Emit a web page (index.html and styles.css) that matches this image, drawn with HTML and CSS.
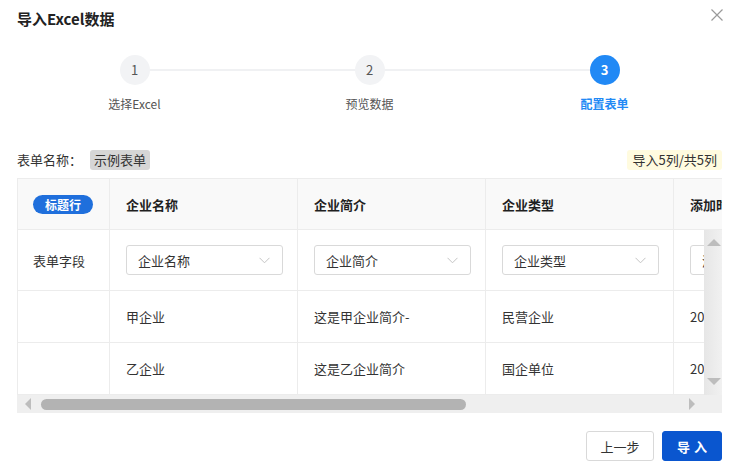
FILE: index.html
```html
<!DOCTYPE html>
<html lang="zh-CN">
<head>
    <meta charset="UTF-8">
    <title>导入Excel数据</title>
    <link rel="stylesheet" href="styles.css">
</head>
<body>
    <div class="dialog">
        <!-- Title bar -->
        <div class="dialog-header">
            <span class="dialog-title">导入Excel数据</span>
            <svg class="close" width="12" height="12" viewBox="0 0 12 12">
                <path d="M0.5 0.5 L11.5 11.5 M11.5 0.5 L0.5 11.5" stroke="#9a9a9a" stroke-width="1.2" fill="none"/>
            </svg>
        </div>

        <!-- Steps -->
        <div class="steps">
            <div class="step">
                <div class="step-num">1</div>
                <div class="step-label">选择Excel</div>
            </div>
            <div class="step">
                <div class="step-num">2</div>
                <div class="step-label">预览数据</div>
            </div>
            <div class="step active">
                <div class="step-num">3</div>
                <div class="step-label">配置表单</div>
            </div>
        </div>

        <!-- Form name row -->
        <div class="form-info">
            <div class="form-name">
                <span>表单名称：</span>
                <span class="tag-grey">示例表单</span>
            </div>
            <span class="tag-yellow">导入5列/共5列</span>
        </div>

        <!-- Mapping table -->
        <div class="table-box">
            <div class="t-row t-head">
                <div class="cell"><span class="badge">标题行</span></div>
                <div class="cell">企业名称</div>
                <div class="cell">企业简介</div>
                <div class="cell">企业类型</div>
                <div class="cell">添加时间</div>
            </div>
            <div class="t-body-wrap">
                <div class="t-body">
                    <div class="t-row t-fields">
                        <div class="cell">表单字段</div>
                        <div class="cell"><div class="select">企业名称<svg class="chev" width="11" height="7" viewBox="0 0 11 7"><path d="M0.5 0.8 L5.5 5.8 L10.5 0.8" stroke="#c4c4c4" fill="none"/></svg></div></div>
                        <div class="cell"><div class="select">企业简介<svg class="chev" width="11" height="7" viewBox="0 0 11 7"><path d="M0.5 0.8 L5.5 5.8 L10.5 0.8" stroke="#c4c4c4" fill="none"/></svg></div></div>
                        <div class="cell"><div class="select">企业类型<svg class="chev" width="11" height="7" viewBox="0 0 11 7"><path d="M0.5 0.8 L5.5 5.8 L10.5 0.8" stroke="#c4c4c4" fill="none"/></svg></div></div>
                        <div class="cell"><div class="select">添加时间<svg class="chev" width="11" height="7" viewBox="0 0 11 7"><path d="M0.5 0.8 L5.5 5.8 L10.5 0.8" stroke="#c4c4c4" fill="none"/></svg></div></div>
                    </div>
                    <div class="t-row t-data">
                        <div class="cell"></div>
                        <div class="cell">甲企业</div>
                        <div class="cell">这是甲企业简介-</div>
                        <div class="cell">民营企业</div>
                        <div class="cell">2023-01-01</div>
                    </div>
                    <div class="t-row t-data">
                        <div class="cell"></div>
                        <div class="cell">乙企业</div>
                        <div class="cell">这是乙企业简介</div>
                        <div class="cell">国企单位</div>
                        <div class="cell">2023-01-02</div>
                    </div>
                </div>
                <div class="vscroll">
                    <span class="arrow-up"></span>
                    <span class="arrow-down"></span>
                </div>
            </div>
            <div class="hscroll">
                <span class="arrow-left"></span>
                <div class="h-thumb"></div>
                <span class="arrow-right"></span>
            </div>
        </div>

        <!-- Footer buttons -->
        <div class="dialog-footer">
            <button class="btn">上一步</button>
            <button class="btn btn-primary">导入</button>
        </div>
    </div>
</body>
</html>
```

FILE: styles.css
```css
body {
    margin: 0;
    padding: 0;
    background-color: #ffffff;
    font-family: "Noto Sans CJK SC", "Noto Sans", sans-serif;
    color: #333333;
}

.dialog {
    width: 705px;
    padding: 0 8px 0 17px;
}

/* Title bar */
.dialog-header {
    height: 38px;
    display: flex;
    justify-content: space-between;
    align-items: center;
}

.dialog-title {
    font-size: 15px;
    font-weight: bold;
    color: #222222;
    line-height: 20px;
}

.close {
    margin-right: -1px;
    margin-top: -8px;
}

/* Steps */
.steps {
    display: flex;
    padding-top: 17px;
}

.step {
    flex: 1;
    display: flex;
    flex-direction: column;
    align-items: center;
    position: relative;
}

.step:not(:last-child)::after {
    content: "";
    position: absolute;
    top: 14px;
    left: calc(50% + 15px);
    width: calc(100% - 30px);
    height: 2px;
    background-color: #f0f1f3;
}

.step-num {
    width: 30px;
    height: 30px;
    border-radius: 50%;
    background-color: #f2f3f5;
    color: #555555;
    font-size: 13px;
    line-height: 30px;
    text-align: center;
}

.step-label {
    margin-top: 10px;
    font-size: 12px;
    line-height: 18px;
    color: #555555;
}

.step.active .step-num {
    background-color: #2189f5;
    color: #ffffff;
    font-weight: bold;
}

.step.active .step-label {
    color: #2189f5;
    font-weight: bold;
}

/* Form name row */
.form-info {
    margin-top: 37px;
    display: flex;
    justify-content: space-between;
    align-items: center;
    font-size: 13px;
    line-height: 20px;
}

.form-name {
    display: flex;
    align-items: center;
    gap: 8px;
}

.tag-grey {
    background-color: #d6d6d6;
    border-radius: 3px;
    padding: 0 4px;
    color: #333333;
}

.tag-yellow {
    background-color: #fffbdf;
    border-radius: 3px;
    padding: 0 5px;
    color: #333333;
}

/* Table */
.table-box {
    margin-top: 8px;
    width: 705px;
    overflow: hidden;
}

.t-row {
    display: grid;
    grid-template-columns: 93px 188px 188px 188px 188px;
    width: 845px;
}

.cell {
    display: flex;
    align-items: center;
    padding-left: 16px;
    border-right: 1px solid #ececec;
    border-bottom: 1px solid #ececec;
    font-size: 13px;
    white-space: nowrap;
    overflow: hidden;
}

.cell:first-child {
    border-left: 1px solid #ececec;
    padding-left: 15px;
}

.t-head {
    height: 52px;
    background-color: #f9f9f9;
    border-top: 1px solid #ececec;
    box-sizing: border-box;
}

.t-head .cell {
    font-weight: bold;
    color: #1f1f1f;
}

.badge {
    background-color: #1f6fdc;
    color: #ffffff;
    font-size: 12px;
    font-weight: bold;
    line-height: 19px;
    padding: 0 12px;
    border-radius: 10px;
}

.t-body-wrap {
    display: flex;
}

.t-body {
    width: 687px;
    overflow: hidden;
}

.t-fields {
    height: 61px;
}

.t-data {
    height: 52px;
}

.select {
    width: 157px;
    height: 30px;
    box-sizing: border-box;
    border: 1px solid #d9d9d9;
    border-radius: 3px;
    padding: 0 12px 0 11px;
    display: flex;
    align-items: center;
    justify-content: space-between;
    flex-shrink: 0;
    color: #333333;
}

/* Fake scrollbars */
.vscroll {
    width: 18px;
    height: 165px;
    background: linear-gradient(to right, #e6e6e6, #f1f1f1);
    position: relative;
}

.arrow-up, .arrow-down, .arrow-left, .arrow-right {
    position: absolute;
    width: 0;
    height: 0;
}

.arrow-up {
    top: 9px;
    left: 3px;
    border-left: 7px solid transparent;
    border-right: 7px solid transparent;
    border-bottom: 7px solid #bdbdbd;
}

.arrow-down {
    bottom: 10px;
    left: 3px;
    border-left: 7px solid transparent;
    border-right: 7px solid transparent;
    border-top: 7px solid #bdbdbd;
}

.hscroll {
    height: 18px;
    background-color: #efefef;
    position: relative;
    display: flex;
    align-items: center;
}

.arrow-left {
    left: 8px;
    top: 3px;
    border-top: 6px solid transparent;
    border-bottom: 6px solid transparent;
    border-right: 6px solid #bdbdbd;
}

.arrow-right {
    left: 672px;
    top: 3px;
    border-top: 6px solid transparent;
    border-bottom: 6px solid transparent;
    border-left: 6px solid #bdbdbd;
}

.h-thumb {
    margin-left: 24px;
    width: 425px;
    height: 11px;
    border-radius: 6px;
    background-color: #b3b3b3;
}

/* Footer */
.dialog-footer {
    margin-top: 18px;
    display: flex;
    justify-content: flex-end;
    gap: 8px;
}

.btn {
    width: 68px;
    height: 30px;
    padding: 0;
    border: 1px solid #d9d9d9;
    border-radius: 3px;
    background-color: #ffffff;
    font-family: "Noto Sans CJK SC", sans-serif;
    font-size: 13px;
    color: #333333;
    cursor: pointer;
}

.btn-primary {
    width: 60px;
    border-color: #0a56cf;
    background-color: #0a56cf;
    color: #ffffff;
    font-weight: bold;
    letter-spacing: 4px;
    text-indent: 4px;
}
```
